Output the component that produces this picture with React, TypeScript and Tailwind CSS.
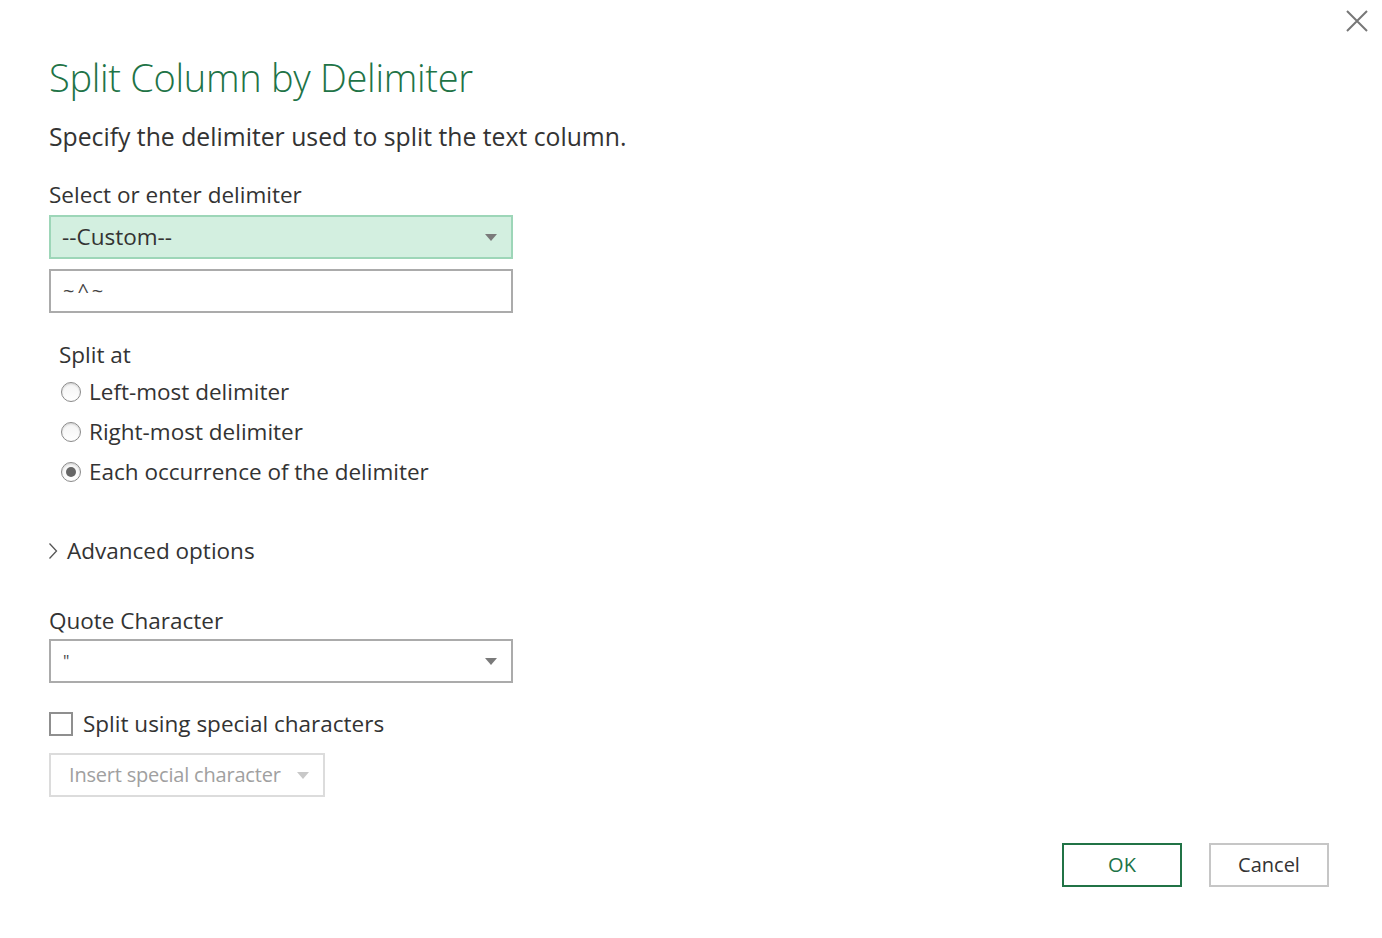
import { useState } from "react";

const Caret = ({ color = "#7a7a7a" }: { color?: string }) => (
    <svg width="12" height="7" viewBox="0 0 12 7">
        <path d="M0 0 L12 0 L6 7 Z" fill={color} />
    </svg>
);

const Radio = ({ checked }: { checked: boolean }) => (
    <span className="w-[20px] h-[20px] rounded-full border border-[#8a8a8a] bg-gradient-to-b from-[#f4f4f4] to-white flex items-center justify-center shadow-[inset_0_1px_2px_rgba(0,0,0,0.15)]">
        {checked && <span className="w-[10px] h-[10px] rounded-full bg-[#666]" />}
    </span>
);

export default function App() {
    const [splitAt, setSplitAt] = useState("each");
    const [special, setSpecial] = useState(false);

    const options = [
        { id: "left", label: "Left-most delimiter" },
        { id: "right", label: "Right-most delimiter" },
        { id: "each", label: "Each occurrence of the delimiter" },
    ];

    return (
        <div
            className="relative w-[1382px] h-[938px] bg-white text-[#333] overflow-hidden"
            style={{ fontFamily: '"Segoe UI", "Open Sans", "Noto Sans", sans-serif' }}
        >
            <button className="absolute right-[13px] top-[9px] w-[24px] h-[24px] flex items-center justify-center">
                <svg width="22" height="22" viewBox="0 0 22 22">
                    <path d="M1 1 L21 21 M21 1 L1 21" stroke="#777" strokeWidth="2" />
                </svg>
            </button>

            <div className="pl-[49px] pt-[51px]">
                <h1 className="text-[38px] font-light text-[#217346] leading-[52px] tracking-[-0.3px]">
                    Split Column by Delimiter
                </h1>
                <p className="mt-[18px] text-[24.75px] leading-[32px]">
                    Specify the delimiter used to split the text column.
                </p>

                <div className="mt-[26px] text-[22.5px] leading-[32px]">Select or enter delimiter</div>
                <div className="mt-[4px] w-[464px] h-[44px] bg-[#d3efe0] border-2 border-[#9dd6b8] flex items-center justify-between pl-[11px] pr-[14px]">
                    <span className="text-[22.5px]">--Custom--</span>
                    <Caret />
                </div>
                <div className="mt-[10px] w-[464px] h-[44px] border-2 border-[#ababab] flex items-center pl-[12px]">
                    <span className="text-[20px] tracking-[3px] text-[#444]">~^~</span>
                </div>

                <div className="ml-[10px] mt-[26px] text-[22.5px] leading-[32px]">Split at</div>
                <div className="ml-[12px] mt-[5px] flex flex-col gap-[8px]">
                    {options.map((o) => (
                        <label
                            key={o.id}
                            className="flex items-center gap-[8px] h-[32px] text-[22.5px] cursor-pointer"
                            onClick={() => setSplitAt(o.id)}
                        >
                            <Radio checked={splitAt === o.id} />
                            <span>{o.label}</span>
                        </label>
                    ))}
                </div>

                <div className="mt-[47px] -ml-[1px] flex items-center gap-[9px] h-[32px]">
                    <svg width="10" height="18" viewBox="0 0 10 18">
                        <path d="M1.5 1.5 L8.5 9 L1.5 16.5" stroke="#555" strokeWidth="1.3" fill="none" />
                    </svg>
                    <span className="text-[22.5px]">Advanced options</span>
                </div>

                <div className="mt-[38px] text-[22.5px] leading-[32px]">Quote Character</div>
                <div className="mt-[2px] w-[464px] h-[44px] border-2 border-[#ababab] flex items-center justify-between pl-[12px] pr-[14px]">
                    <span className="text-[16px] text-[#444]">"</span>
                    <Caret />
                </div>

                <label
                    className="mt-[27px] flex items-center gap-[10px] h-[28px] cursor-pointer"
                    onClick={() => setSpecial(!special)}
                >
                    <span className="w-[24px] h-[24px] border-2 border-[#8f8f8f] bg-white" />
                    <span className="text-[22.5px]">Split using special characters</span>
                </label>

                <div className="mt-[15px] w-[276px] h-[44px] border-2 border-[#dcdcdc] flex items-center pl-[18px] gap-[16px] text-[#a0a0a0]">
                    <span className="text-[20px] tracking-[-0.2px]">Insert special character</span>
                    <Caret color="#c8c8c8" />
                </div>
            </div>

            <div className="absolute right-[53px] top-[843px] flex gap-[27px]">
                <button className="w-[120px] h-[44px] border-2 border-[#217346] text-[#217346] text-[20px]">OK</button>
                <button className="w-[120px] h-[44px] border-2 border-[#c6c6c6] text-[#333] text-[20px]">Cancel</button>
            </div>
        </div>
    );
}
